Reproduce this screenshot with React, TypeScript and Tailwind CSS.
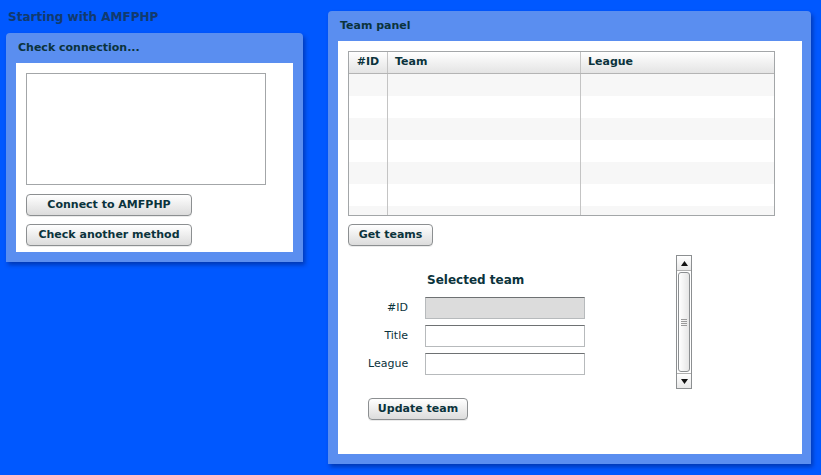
import React from "react";

const font = "font-['DejaVu_Sans','Verdana',sans-serif]";

const Button: React.FC<{ label: string; w: string }> = ({ label, w }) => (
    <button className={`${w} h-[22px] rounded-[4px] border border-[#8c8f91] bg-gradient-to-b from-white to-[#dcdcdc] text-[11px] font-bold text-[#0b333c] shadow-[0_1px_0_rgba(0,0,0,0.08)]`}>
        {label}
    </button>
);

const Panel: React.FC<{ title: string; className: string; children: React.ReactNode }> = ({ title, className, children }) => (
    <div className={`${className} flex flex-col rounded-t-[4px] bg-[#5a8ef0] shadow-[2px_3px_4px_rgba(0,20,90,0.45)]`}>
        <div className="h-[30px] shrink-0 flex items-center pt-[1px] px-3 text-[11px] font-bold text-[#0b333c]">{title}</div>
        {children}
    </div>
);

const TextField: React.FC<{ disabled?: boolean }> = ({ disabled }) => (
    <div className={`w-[160px] h-[22px] border border-[#b7babc] border-t-[#6e7173] ${disabled ? "bg-[#dcdcdc]" : "bg-white"}`}></div>
);

const ScrollBar: React.FC = () => (
    <div className="w-[16px] h-[134px] flex flex-col border border-[#8c8f91] bg-white">
        <div className="h-[15px] shrink-0 flex items-center justify-center bg-gradient-to-b from-white to-[#e8e8e8] border-b border-[#b0b0b0]">
            <svg width="7" height="5" viewBox="0 0 7 5"><polygon points="3.5,0 7,5 0,5" fill="#111" /></svg>
        </div>
        <div className="flex-1 px-[1px] py-[1px]">
            <div className="h-full rounded-[3px] border border-[#8c8f91] bg-gradient-to-r from-white to-[#e6e6e6] flex flex-col items-center justify-center gap-[1px]">
                <div className="w-[6px] h-[1px] bg-[#9a9a9a]"></div>
                <div className="w-[6px] h-[1px] bg-[#9a9a9a]"></div>
                <div className="w-[6px] h-[1px] bg-[#9a9a9a]"></div>
                <div className="w-[6px] h-[1px] bg-[#9a9a9a]"></div>
            </div>
        </div>
        <div className="h-[15px] shrink-0 flex items-center justify-center bg-gradient-to-b from-white to-[#e8e8e8] border-t border-[#b0b0b0]">
            <svg width="7" height="5" viewBox="0 0 7 5"><polygon points="0,0 7,0 3.5,5" fill="#111" /></svg>
        </div>
    </div>
);

export default function App() {
    const rows = [0, 1, 2, 3, 4, 5, 6];
    return (
        <div className={`${font} w-[821px] h-[475px] overflow-hidden bg-[#0058ff] flex items-start`}>

            <div className="ml-[6px] flex flex-col">
                <div className="h-[33px] pl-[2px] pt-[9px] text-[12px] font-bold text-[#123a6e] leading-[17px]">Starting with AMFPHP</div>
                <Panel title="Check connection..." className="w-[297px] h-[229px]">
                    <div className="mx-[10px] mb-[10px] flex-1 bg-white px-[10px] pt-[10px] flex flex-col">
                        <div className="w-[240px] h-[112px] border border-[#a3a6a8] bg-white"></div>
                        <div className="mt-[9px] flex flex-col gap-[8px]">
                            <Button label="Connect to AMFPHP" w="w-[166px]" />
                            <Button label="Check another method" w="w-[166px]" />
                        </div>
                    </div>
                </Panel>
            </div>

            <Panel title="Team panel" className="ml-[25px] mt-[11px] w-[483px] h-[453px]">
                <div className="ml-[10px] mr-[9px] mb-[10px] flex-1 bg-white p-[10px] flex flex-col">

                    <div className="w-[427px] h-[165px] shrink-0 border border-[#a3a6a8] overflow-hidden flex flex-col text-[11px] text-[#0b333c]">
                        <div className="h-[22px] shrink-0 flex font-bold bg-gradient-to-b from-white to-[#e4e4e4] border-b border-[#b4b4b4]">
                            <div className="w-[39px] border-r border-[#c4c4c4] flex items-center justify-center">#ID</div>
                            <div className="w-[193px] border-r border-[#c4c4c4] flex items-center pl-[7px]">Team</div>
                            <div className="flex-1 flex items-center pl-[7px]">League</div>
                        </div>
                        {rows.map((r) => (
                            <div key={r} className={`h-[22px] shrink-0 flex ${r % 2 === 0 ? "bg-[#f7f7f7]" : "bg-white"}`}>
                                <div className="w-[39px] border-r border-[#c4c4c4]"></div>
                                <div className="w-[193px] border-r border-[#c4c4c4]"></div>
                                <div className="flex-1"></div>
                            </div>
                        ))}
                    </div>

                    <div className="mt-[8px] flex">
                        <Button label="Get teams" w="w-[85px]" />
                    </div>

                    <div className="mt-[9px] flex items-start">
                        <div className="ml-[20px] w-[217px] pt-[16px] flex flex-col text-[11px] text-[#0b333c]">
                            <div className="h-[18px] ml-[59px] text-[12px] font-bold leading-[18px]">Selected team</div>
                            <div className="mt-[8px] flex flex-col gap-[6px]">
                                <div className="flex items-center">
                                    <div className="w-[40px] text-right">#ID</div>
                                    <div className="ml-[17px]"><TextField disabled /></div>
                                </div>
                                <div className="flex items-center">
                                    <div className="w-[40px] text-right">Title</div>
                                    <div className="ml-[17px]"><TextField /></div>
                                </div>
                                <div className="flex items-center">
                                    <div className="w-[40px] text-right">League</div>
                                    <div className="ml-[17px]"><TextField /></div>
                                </div>
                            </div>
                            <div className="mt-[23px] flex">
                                <Button label="Update team" w="w-[100px]" />
                            </div>
                        </div>
                        <div className="ml-[91px]">
                            <ScrollBar />
                        </div>
                    </div>
                </div>
            </Panel>
        </div>
    );
}
